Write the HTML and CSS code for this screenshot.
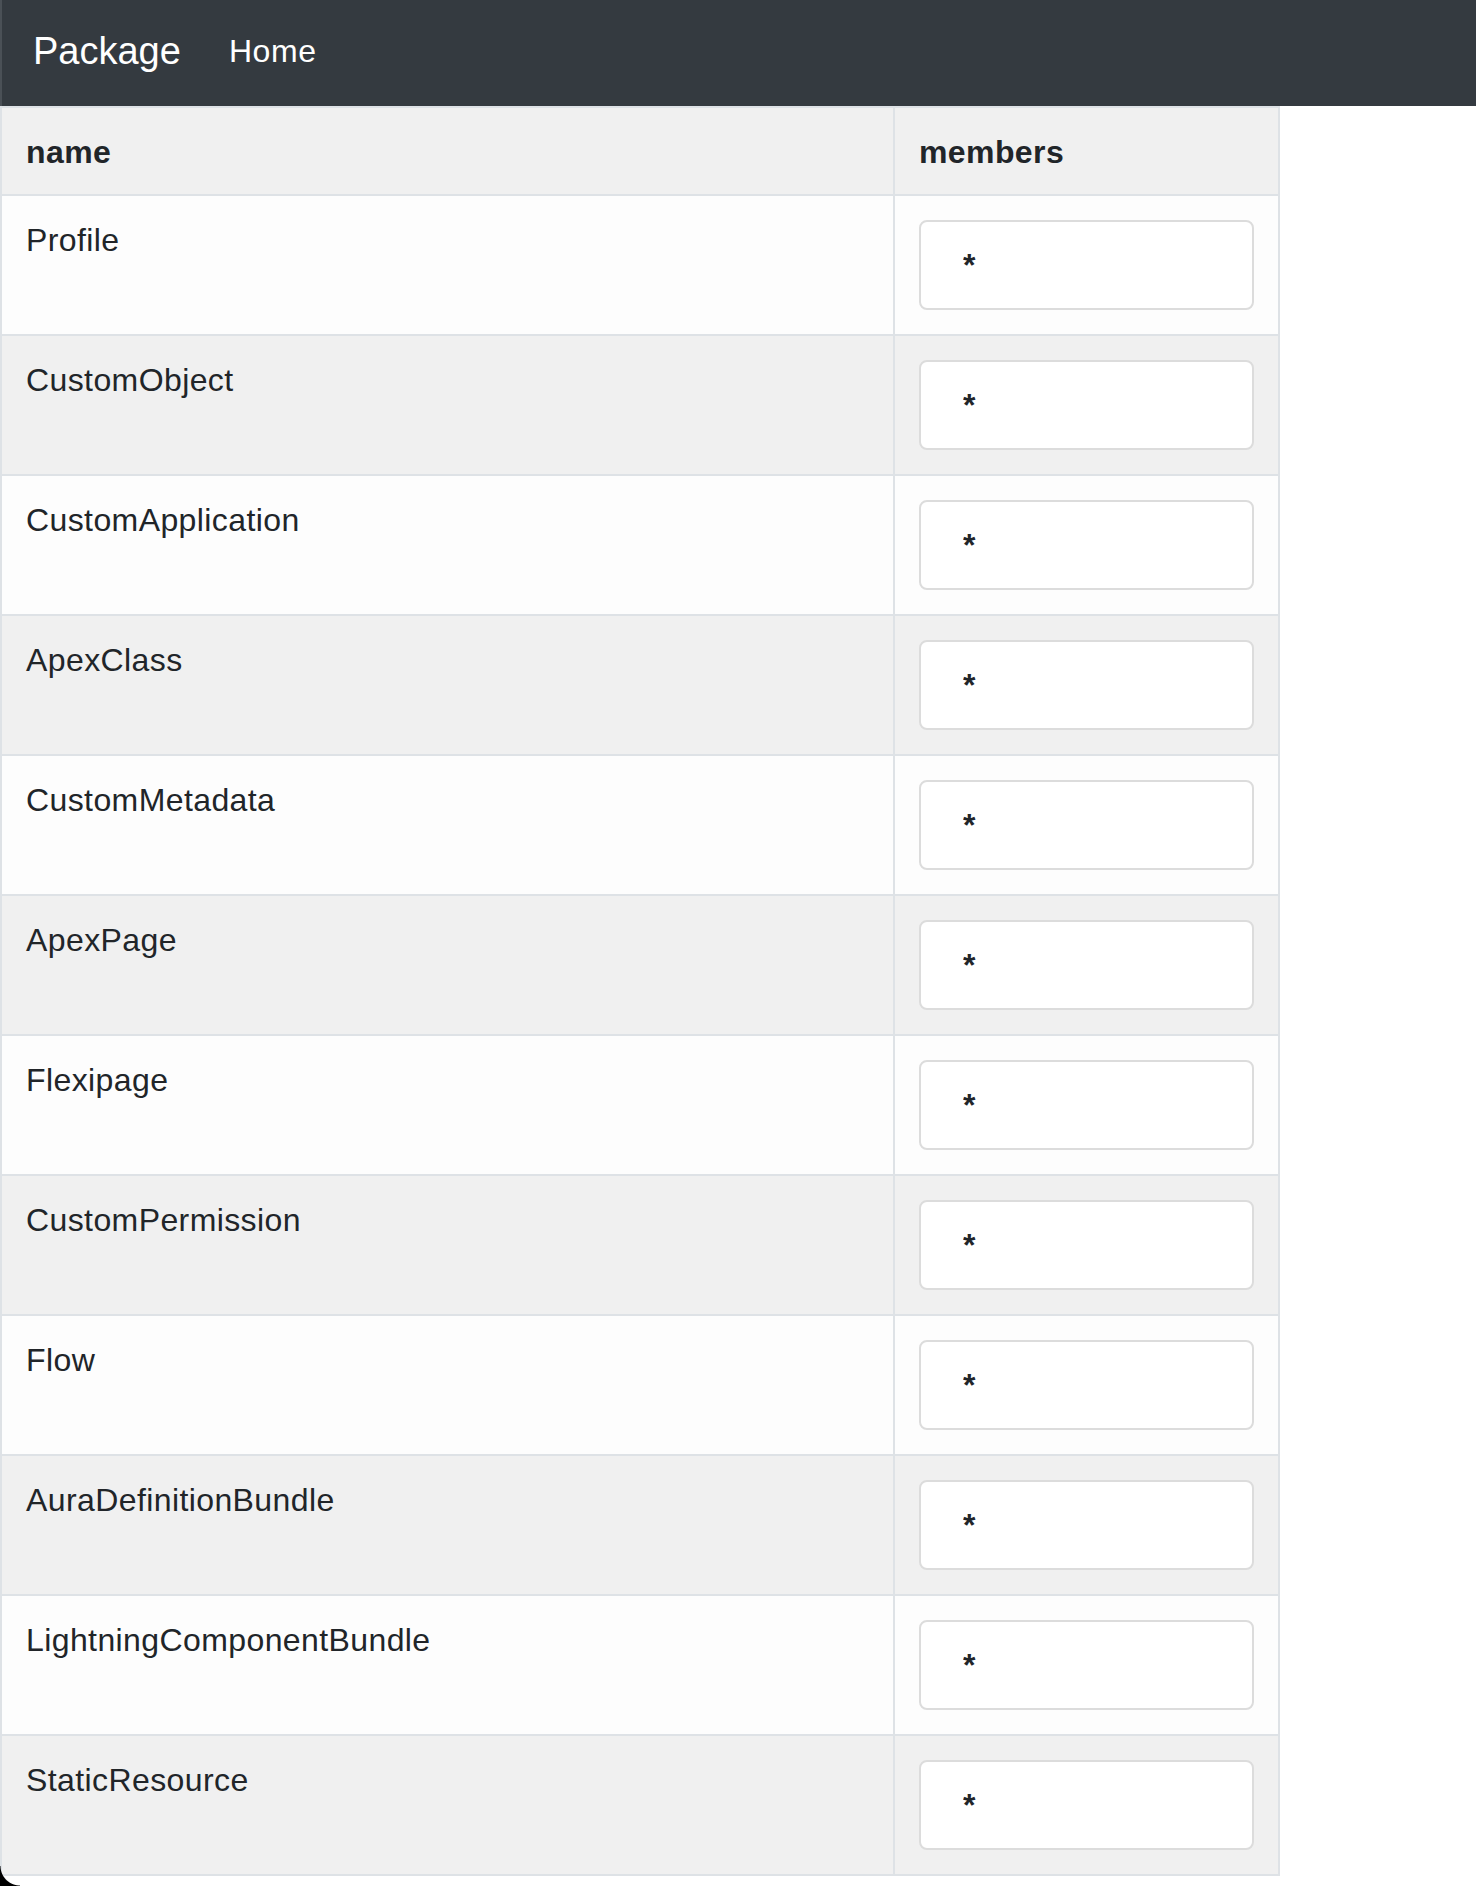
FILE: index.html
```html
<!DOCTYPE html>
<html lang="en">
<head>
<meta charset="utf-8">
<title>Package</title>
<link rel="stylesheet" href="styles.css">
</head>
<body>
<nav class="navbar">
  <a class="brand" href="#">Package</a>
  <a class="nav-link" href="#">Home</a>
</nav>
<table class="pkg-table">
  <thead>
    <tr><th class="col-name">name</th><th class="col-members">members</th></tr>
  </thead>
  <tbody>
    <tr><td>Profile</td><td><input class="members-input" type="text" value="*"></td></tr>
    <tr><td>CustomObject</td><td><input class="members-input" type="text" value="*"></td></tr>
    <tr><td>CustomApplication</td><td><input class="members-input" type="text" value="*"></td></tr>
    <tr><td>ApexClass</td><td><input class="members-input" type="text" value="*"></td></tr>
    <tr><td>CustomMetadata</td><td><input class="members-input" type="text" value="*"></td></tr>
    <tr><td>ApexPage</td><td><input class="members-input" type="text" value="*"></td></tr>
    <tr><td>Flexipage</td><td><input class="members-input" type="text" value="*"></td></tr>
    <tr><td>CustomPermission</td><td><input class="members-input" type="text" value="*"></td></tr>
    <tr><td>Flow</td><td><input class="members-input" type="text" value="*"></td></tr>
    <tr><td>AuraDefinitionBundle</td><td><input class="members-input" type="text" value="*"></td></tr>
    <tr><td>LightningComponentBundle</td><td><input class="members-input" type="text" value="*"></td></tr>
    <tr><td>StaticResource</td><td><input class="members-input" type="text" value="*"></td></tr>
  </tbody>
</table>
</body>
</html>
```
FILE: styles.css
```css
html, body {
  margin: 0;
  padding: 0;
  background: #ffffff;
}
body {
  font-family: "Liberation Sans", Arial, sans-serif;
  color: #212529;
  font-size: 32px;
}
.navbar {
  display: flex;
  align-items: center;
  height: 106px;
  box-sizing: border-box;
  padding: 0 32px 4px 31px;
  background: #343a40;
  border-left: 2px solid #4a5056;
}
.brand {
  font-size: 38px;
  line-height: 1.5;
  color: #ffffff;
  text-decoration: none;
  margin-right: 32px;
}
.nav-link {
  font-size: 32px;
  line-height: 1.5;
  letter-spacing: 0.6px;
  color: #ffffff;
  text-decoration: none;
  padding: 0 16px;
}
.pkg-table {
  width: 1280px;
  table-layout: fixed;
  border-collapse: separate;
  border-spacing: 0;
  border-right: 2px solid #dee2e6;
  border-bottom: 2px solid #dee2e6;
}
.pkg-table th,
.pkg-table td {
  box-sizing: border-box;
  border-top: 2px solid #dee2e6;
  border-left: 2px solid #dee2e6;
  text-align: left;
  vertical-align: top;
  font-size: 32px;
  line-height: 40px;
  letter-spacing: 0.4px;
}
.pkg-table th {
  font-weight: bold;
  padding: 24px 24px 22px 24px;
  background: #f0f0f0;
}
.pkg-table .col-name {
  width: 893px;
}
.pkg-table td {
  padding: 24px 24px 24px 24px;
}
.pkg-table tbody tr:nth-child(odd) td {
  background: #fdfdfd;
}
.pkg-table tbody tr:nth-child(even) td {
  background: #f0f0f0;
}
.members-input {
  display: block;
  width: 100%;
  height: 90px;
  box-sizing: border-box;
  margin: 0;
  padding: 0 20px 0 42px;
  border: 2px solid #dcdcdc;
  border-radius: 8px;
  background: #ffffff;
  font-family: "Liberation Sans", Arial, sans-serif;
  font-size: 32px;
  font-weight: bold;
  color: #212529;
  outline: none;
}
body::after {
  content: "";
  position: fixed;
  left: 0;
  bottom: 0;
  width: 20px;
  height: 20px;
  background: radial-gradient(circle at 100% 0, rgba(0,0,0,0) 19px, #000000 20px);
}
```
